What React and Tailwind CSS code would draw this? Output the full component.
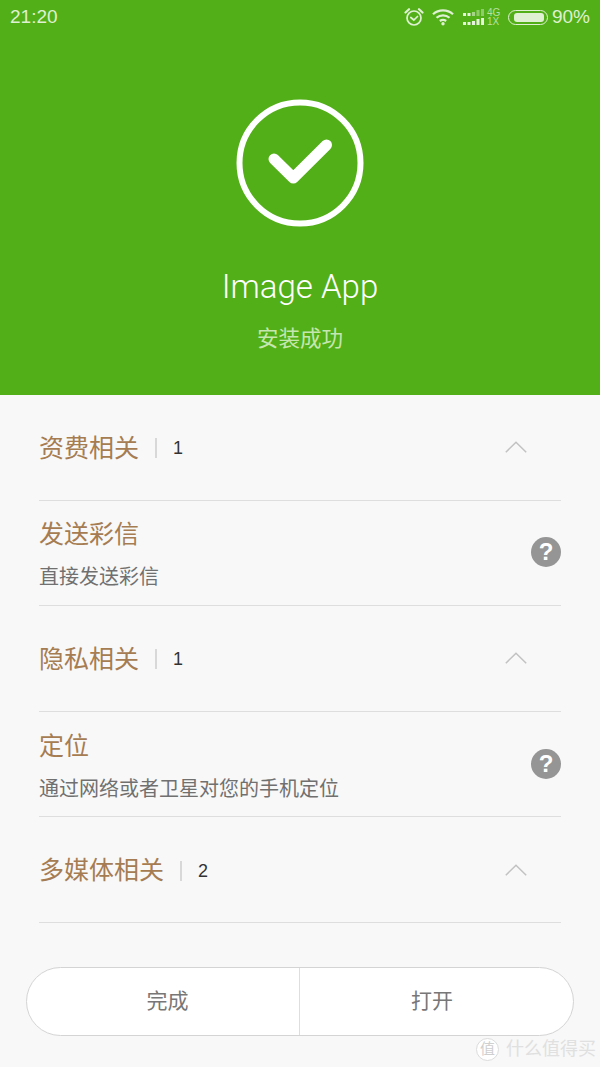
const CJK = "font-['Roboto','Noto_Sans_CJK_SC',sans-serif]";

// status bar icons, drawn by hand
const AlarmIcon = () => (
  <svg width="20" height="20" viewBox="0 0 20 20" fill="none" stroke="#dff0d3" strokeWidth="1.7" strokeLinecap="round">
    <circle cx="10" cy="11" r="7" />
    <path d="M6.800 10.500l3 2.500L13.500 9.500" />
    <path d="M1.500 5.500L5 2.200M18.500 5.500L15 2.200" strokeWidth="2.200" />
  </svg>
);

const WifiIcon = () => (
  <svg width="22" height="18" viewBox="0 0 22 18" fill="none" stroke="#dff0d3" strokeWidth="2.200">
    <path d="M1 6.200C6.600 1 15.400 1 21 6.200" />
    <path d="M4.500 9.800C8.200 6.500 13.800 6.500 17.500 9.800" />
    <path d="M7.800 13c1.900-1.400 4.500-1.400 6.400 0" />
    <circle cx="11" cy="15.800" r="1.700" fill="#dff0d3" stroke="none" />
  </svg>
);

const SignalTop = () => (
  <svg width="21" height="8" viewBox="0 0 21 8">
    <rect x="0" y="4" width="3" height="3" fill="#e6f3dc" />
    <rect x="4.500" y="4" width="3" height="3" fill="#e6f3dc" />
    <rect x="9" y="3" width="3" height="4" fill="#a5d586" />
    <rect x="13.500" y="1" width="3" height="6" fill="#8fcb6b" />
    <rect x="18" y="0" width="3" height="7" fill="#8fcb6b" />
  </svg>
);

const SignalBottom = () => (
  <svg width="21" height="8" viewBox="0 0 21 8">
    <rect x="0" y="4" width="3" height="3" fill="#e6f3dc" />
    <rect x="4.500" y="4" width="3" height="3" fill="#e6f3dc" />
    <rect x="9" y="3" width="3" height="4" fill="#e6f3dc" />
    <rect x="13.500" y="1" width="3" height="6" fill="#e6f3dc" />
    <rect x="18" y="0" width="3" height="7" fill="#e6f3dc" />
  </svg>
);

const StatusBar = () => (
  <div className="flex h-[34px] items-center justify-between pl-[10px] pr-[10px] text-[19px] text-[#dff0d3] font-['Liberation_Sans',sans-serif]">
    <span>21:20</span>
    <div className="flex items-center">
      <AlarmIcon />
      <div className="ml-[8px]"><WifiIcon /></div>
      <div className="ml-[9px] flex flex-col gap-[1px]">
        <SignalTop />
        <SignalBottom />
      </div>
      <div className="ml-[3px] flex w-[14px] flex-col text-[10px] leading-[9px] text-[#b9e0a0]">
        <span>4G</span>
        <span>1X</span>
      </div>
      <div className="ml-[7px] flex h-[15px] w-[40px] items-center rounded-full border border-[#dff0d3] py-[2px] pl-[5px] pr-[3px]">
        <div className="h-full w-full rounded-[3px] bg-[#dff0d3]" />
      </div>
      <span className="ml-[4px]">90%</span>
    </div>
  </div>
);

const CheckCircle = () => (
  <svg width="128" height="128" viewBox="0 0 128 128" fill="none">
    <circle cx="64" cy="64" r="60.500" stroke="#fff" strokeWidth="6" />
    <path d="M38 60L57.300 79L90.500 46" stroke="#fff" strokeWidth="11" strokeLinecap="round" strokeLinejoin="round" />
  </svg>
);

const Chevron = () => (
  <svg width="22" height="12" viewBox="0 0 22 12" fill="none" stroke="#c2c2c2" strokeWidth="1.500">
    <path d="M0.800 11.200L11 1.200L21.200 11.200" />
  </svg>
);

const GroupHeader = ({ title, count }) => (
  <div className="flex h-[105.600px] items-center justify-between border-b border-[#dedede]">
    <div className="mt-[2px] flex items-center">
      <span className="text-[25px] leading-none text-[#a67c52]">{title}</span>
      <span className="ml-[16px] h-[20px] w-[2px] bg-[#d8d8d8]" />
      <span className="ml-[16px] mt-[1px] font-['Liberation_Sans',sans-serif] text-[18px] text-[#333]">{count}</span>
    </div>
    <div className="mr-[34px]"><Chevron /></div>
  </div>
);

const PermRow = ({ title, desc }) => (
  <div className="flex h-[105.600px] items-center justify-between border-b border-[#dedede]">
    <div className="mt-[4px] flex flex-col">
      <span className="text-[25px] leading-[30px] text-[#a67c52]">{title}</span>
      <span className="mt-[15px] text-[20px] leading-[24px] text-[#707070]">{desc}</span>
    </div>
    <div className="-mt-[1px] flex h-[30px] w-[30px] items-center justify-center rounded-full bg-[#959595] text-[24px] font-bold leading-none text-white font-['Liberation_Sans',sans-serif]">?</div>
  </div>
);

export default function App() {
  return (
    <div className={`flex h-[1067px] w-[600px] flex-col overflow-hidden bg-[#f8f8f8] ${CJK}`}>
      {/* green top part */}
      <div className="flex h-[395px] flex-col bg-[#52af17]">
        <StatusBar />
        <div className="mt-[65px] flex flex-col items-center">
          <CheckCircle />
          <div className="mt-[38px] text-[33px] font-light leading-[44px] text-white">Image App</div>
          <div className="mt-[15px] text-[21.500px] leading-[30px] text-[#c6e6b0]">安装成功</div>
        </div>
      </div>

      {/* permission list */}
      <div className="mx-[39px] flex flex-col">
        <GroupHeader title="资费相关" count="1" />
        <PermRow title="发送彩信" desc="直接发送彩信" />
        <GroupHeader title="隐私相关" count="1" />
        <PermRow title="定位" desc="通过网络或者卫星对您的手机定位" />
        <GroupHeader title="多媒体相关" count="2" />
      </div>

      {/* bottom buttons */}
      <div className="mx-[26px] mt-[44px] flex h-[69px] rounded-full border border-[#d4d4d4] bg-white text-[21px] text-[#777]">
        <div className="flex w-[273px] items-center justify-center border-r border-[#dedede] pl-[9px]">完成</div>
        <div className="flex flex-1 items-center justify-center pr-[9px]">打开</div>
      </div>

      {/* watermark */}
      <div className="relative">
        <div className="absolute right-[4px] top-[2px] flex items-center gap-[7px] text-[18px] leading-none text-[#e0e0e0]">
          <span className="flex h-[23px] w-[23px] items-center justify-center rounded-full border border-[#dcdcdc] bg-white text-[15px] text-[#cfcfcf]">值</span>
          <span>什么值得买</span>
        </div>
      </div>
    </div>
  );
}
